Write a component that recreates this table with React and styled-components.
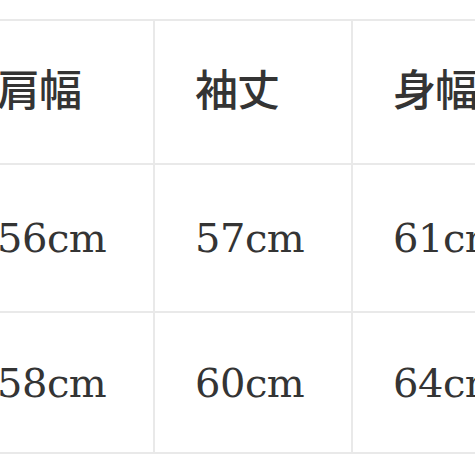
import React from "react";
import styled, { createGlobalStyle } from "styled-components";

const GlobalStyle = createGlobalStyle`
  html, body {
    margin: 0;
    padding: 0;
    background: #ffffff;
  }
  body {
    width: 475px;
    height: 475px;
    overflow: hidden;
  }
`;

const Page = styled.div`
  padding-top: 19px;
  margin-left: -43px;
`;

const Table = styled.div`
  display: grid;
  grid-template-columns: repeat(3, 196px);
  gap: 2px;
  width: max-content;
  background: #e9e9e9;
  padding: 2px 2px 2px 0;
`;

const Cell = styled.div`
  height: ${(p) => p.$h}px;
  display: flex;
  align-items: center;
  padding-left: 40px;
  background: #ffffff;
  color: #343434;
  box-sizing: border-box;
`;

const HeadText = styled.span`
  font-family: "Noto Sans CJK JP", "Noto Sans", sans-serif;
  font-size: 43px;
  font-weight: 500;
  letter-spacing: -1px;
  margin-top: -10px;
`;

const ValueText = styled.span`
  font-family: "DejaVu Serif", "Liberation Serif", serif;
  font-size: 40px;
  letter-spacing: -0.5px;
`;

const headers = ["肩幅", "袖丈", "身幅"];
const rows = [
  { h: 146, values: ["56cm", "57cm", "61cm"] },
  { h: 139, values: ["58cm", "60cm", "64cm"] },
];

export default function App() {
  return (
    <Page>
      <GlobalStyle />
      <Table>
        {headers.map((t) => (
          <Cell key={t} $h={142}>
            <HeadText>{t}</HeadText>
          </Cell>
        ))}
        {rows.map((row, i) =>
          row.values.map((v) => (
            <Cell key={i + v} $h={row.h}>
              <ValueText>{v}</ValueText>
            </Cell>
          ))
        )}
      </Table>
    </Page>
  );
}
